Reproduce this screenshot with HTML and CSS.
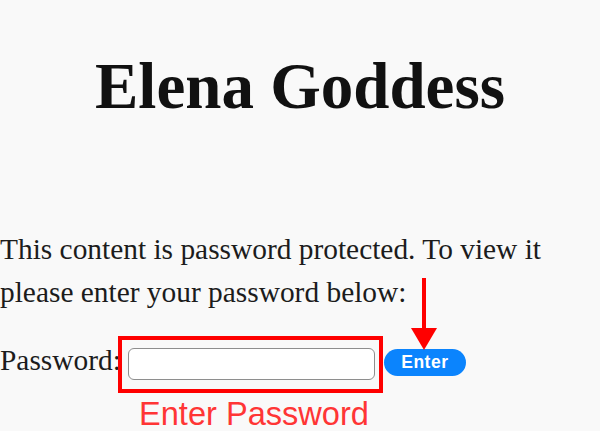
FILE: index.html
```html
<!DOCTYPE html>
<html lang="en">
<head>
<meta charset="utf-8">
<title>Elena Goddess</title>
<link rel="stylesheet" href="styles.css">
</head>
<body>
<div class="page">
  <h1 class="title">Elena Goddess</h1>
  <form class="protect">
    <p class="notice">This content is password protected. To view it please enter your password below:</p>
    <div class="row">
      <label class="label" for="pw">Password:</label>
      <input class="field" id="pw" type="password">
      <button class="enter" type="button">Enter</button>
    </div>
  </form>

  <div class="mark-box"></div>
  <div class="mark-arrow">
    <div class="arrow-line"></div>
    <div class="arrow-head"></div>
  </div>
  <div class="mark-text">Enter Password</div>
</div>
</body>
</html>
```
FILE: styles.css
```css
html, body {
  margin: 0;
  padding: 0;
  background: #f9f9f9;
}

.page {
  position: relative;
  width: 600px;
  height: 431px;
  overflow: hidden;
  font-family: "Liberation Serif", "Times New Roman", serif;
  color: #1c1c1c;
}

.title {
  margin: 0;
  padding-top: 50px;
  font-size: 65px;
  line-height: 72px;
  font-weight: 700;
  text-align: center;
  color: #111;
}

.protect {
  margin: 106px 0 0 0;
}

.notice {
  margin: 0;
  width: 570px;
  font-size: 29.4px;
  line-height: 43px;
}

.row {
  display: flex;
  align-items: center;
  margin-top: 30px;
}

.label {
  font-size: 29.4px;
  line-height: 32px;
  padding-bottom: 8px;
  margin-right: 7px;
}

.field {
  box-sizing: border-box;
  width: 247px;
  height: 32px;
  margin: 0;
  padding: 0 8px;
  background: #fff;
  border: 1.5px solid #8e8e8e;
  border-radius: 6px;
  outline: none;
}

.enter {
  box-sizing: border-box;
  width: 82px;
  height: 27px;
  margin: 0 0 3px 9px;
  padding: 0;
  border: none;
  border-radius: 14px;
  background: #0b84fd;
  color: #fff;
  font-family: "Liberation Sans", Arial, sans-serif;
  font-weight: 700;
  font-size: 17.5px;
  letter-spacing: 0.5px;
  line-height: 27px;
}

/* annotation overlays */
.mark-box {
  position: absolute;
  left: 118px;
  top: 336px;
  width: 265px;
  height: 57px;
  box-sizing: border-box;
  border: 4px solid #ff0000;
}

.mark-arrow {
  position: absolute;
  left: 411px;
  top: 278px;
  width: 26px;
  display: flex;
  flex-direction: column;
  align-items: center;
}

.arrow-line {
  width: 4px;
  height: 50px;
  background: #ff0000;
}

.arrow-head {
  width: 0;
  height: 0;
  border-left: 13px solid transparent;
  border-right: 13px solid transparent;
  border-top: 22px solid #ff0000;
}

.mark-text {
  position: absolute;
  left: 139px;
  top: 396px;
  font-family: "Liberation Sans", Arial, sans-serif;
  font-size: 32.6px;
  line-height: 36px;
  color: #ff3535;
}
```
